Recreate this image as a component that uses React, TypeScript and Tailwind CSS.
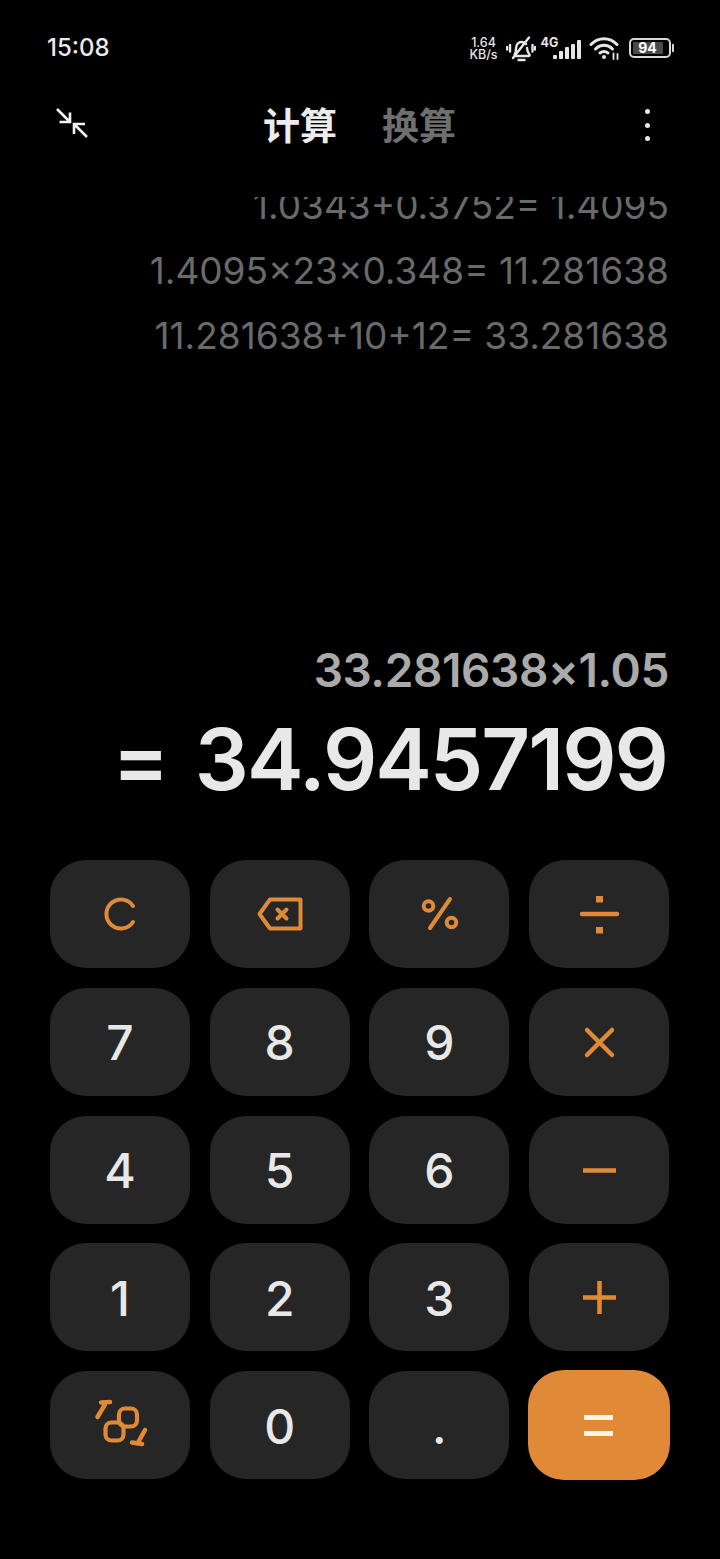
import type { ReactNode } from "react";

const ORANGE = "#e08a38";

function Icon({ children, size = 48, vb = 48 }: { children: ReactNode; size?: number; vb?: number }) {
  return (
    <svg className="overflow-visible" width={size} height={size} viewBox={`0 0 ${vb} ${vb}`} fill="none" stroke={ORANGE} strokeWidth={4} strokeLinecap="round" strokeLinejoin="round">
      {children}
    </svg>
  );
}

const ClearIcon = () => (
  <Icon>
    <path d="M37 16A14.500 14.500 0 1 0 37 32" />
  </Icon>
);

const BackspaceIcon = () => (
  <Icon>
    <path d="M14 9.500H44.500V38.500H14L3.500 24Z" />
    <path d="M21.500 19.500l9 9M30.500 19.500l-9 9" />
  </Icon>
);

const PercentIcon = () => (
  <Icon>
    <circle cx="13.500" cy="16" r="4.800" />
    <circle cx="36.500" cy="32.500" r="4.800" />
    <path d="M35 9 15 38" />
  </Icon>
);

const DivideIcon = () => (
  <Icon>
    <path d="M7 24h35" strokeWidth={4.500} />
    <rect x="21" y="6" width="7" height="6.500" fill={ORANGE} stroke="none" />
    <rect x="21" y="37" width="7" height="6.500" fill={ORANGE} stroke="none" />
  </Icon>
);

const TimesIcon = () => (
  <Icon>
    <path d="M12 12l25 25M37 12 12 37" strokeWidth={4.500} />
  </Icon>
);

const MinusIcon = () => (
  <Icon>
    <path d="M8 24.500h33" strokeWidth={4.500} strokeLinecap="butt" />
  </Icon>
);

const PlusIcon = () => (
  <Icon>
    <path d="M8 24.500h33M24.500 8v33" strokeWidth={4.500} strokeLinecap="butt" />
  </Icon>
);

const SwapIcon = () => (
  <Icon size={52} vb={52}>
    <rect x="11.500" y="23.500" width="18" height="18" rx="6" strokeWidth={4.200} />
    <rect x="25" y="9.500" width="18" height="18" rx="6" strokeWidth={4.200} />
    <path d="M3.500 18 11 5.500M7 3.500l9-.5" strokeWidth={4.500} />
    <path d="M51 31l-7.500 13.500M38 43.500l10 1.500" strokeWidth={4.500} />
  </Icon>
);

const keys: { id: string; label?: string; icon?: ReactNode; accent?: boolean }[] = [
  { id: "clear", icon: <ClearIcon /> },
  { id: "back", icon: <BackspaceIcon /> },
  { id: "percent", icon: <PercentIcon /> },
  { id: "divide", icon: <DivideIcon /> },
  { id: "7", label: "7" },
  { id: "8", label: "8" },
  { id: "9", label: "9" },
  { id: "times", icon: <TimesIcon /> },
  { id: "4", label: "4" },
  { id: "5", label: "5" },
  { id: "6", label: "6" },
  { id: "minus", icon: <MinusIcon /> },
  { id: "1", label: "1" },
  { id: "2", label: "2" },
  { id: "3", label: "3" },
  { id: "plus", icon: <PlusIcon /> },
  { id: "swap", icon: <SwapIcon /> },
  { id: "0", label: "0" },
  { id: "dot", label: "." },
  { id: "equals", accent: true },
];

function StatusIcons() {
  return (
    <div className="flex items-center text-[#e6e6e6]">
      <div className="mb-[1px] w-[30px] text-center text-[12.500px] leading-[12px] font-medium">
        1.64
        <br />
        KB/s
      </div>
      {/* muted bell */}
      <svg className="ml-[7px]" width="30" height="26" viewBox="0 0 30 26" fill="none" stroke="#e6e6e6" strokeWidth="2.400" strokeLinecap="round" strokeLinejoin="round">
        <path d="M8.500 18.500c1.500-1.500 1.500-3.500 1.500-6 0-4 2.500-6.500 5.500-6.500 2 0 3.500.8 4.500 2" />
        <path d="M21 12c.2 3 1 5 2.500 6.500 .6 1-.2 1.500-1 1.500H9" />
        <path d="M12.500 24h6" />
        <path d="M23 1.500 7 22" />
        <path d="M4 9v6.500M26.500 9v6.500" />
        <path d="M1 11v2.500M29 11v2.500" />
      </svg>
      {/* 4G and signal bars */}
      <div className="relative ml-[5px] h-[26px] w-[41px]">
        <span className="absolute top-[1px] left-0 text-[12.500px] leading-[12px] font-bold">4G</span>
        <div className="absolute right-[1px] bottom-[3px] flex items-end gap-[2.500px]">
          <span className="h-[4px] w-[3.500px] rounded-[1px] bg-[#e6e6e6]" />
          <span className="h-[8px] w-[3.500px] rounded-[1px] bg-[#e6e6e6]" />
          <span className="h-[12px] w-[3.500px] rounded-[1px] bg-[#e6e6e6]" />
          <span className="h-[15px] w-[3.500px] rounded-[1px] bg-[#e6e6e6]" />
          <span className="h-[19px] w-[3.500px] rounded-[1px] bg-[#e6e6e6]" />
        </div>
      </div>
      {/* wifi */}
      <svg className="mt-[-2px] ml-[7px]" width="32" height="24" viewBox="0 0 32 24" fill="none" stroke="#e6e6e6" strokeWidth="3" strokeLinecap="round">
        <path d="M2 8.500C9.500 .8 20.500 .8 28 8.500" />
        <path d="M6.500 13C11.500 8 18.500 8 23.500 13" />
        <path d="M11 17c2.800-2 5.200-2 8 0" />
        <circle cx="15" cy="21" r="2" fill="#e6e6e6" stroke="none" />
        <path d="M24.500 17.500v5.500M28.500 18v5" strokeWidth="1.800" />
      </svg>
      {/* battery */}
      <div className="mt-[-2px] ml-[8px] flex items-center">
        <div className="flex h-[20px] w-[42px] items-center rounded-[5px] border-2 border-[#d8d8d8] p-[2px]">
          <div className="flex h-full w-[30px] items-center justify-center rounded-[1px] bg-[#4a4a4a] text-[14px] leading-none font-bold text-white">94</div>
        </div>
        <span className="ml-[1.500px] h-[8px] w-[2px] rounded-r-[1px] bg-[#d8d8d8]" />
      </div>
    </div>
  );
}

export default function App() {
  return (
    <div className="flex h-[1559px] w-[720px] flex-col overflow-hidden bg-black font-['Inter','Noto_Sans_CJK_SC',sans-serif]">
      {/* status bar */}
      <div className="flex h-[62px] items-end justify-between pr-[46px] pl-[47px] text-[#eaeaea]">
        <span className="text-[24px] leading-[28px] font-medium">15:08</span>
        <StatusIcons />
      </div>

      {/* title row */}
      <div className="relative mt-[33px] flex h-[60px] items-center justify-center gap-[45px] pr-[1px]">
        <svg className="absolute top-[11px] left-[55px]" width="34" height="34" viewBox="0 0 34 34" fill="none" stroke="#f2f2f2" strokeWidth="2.600">
          <path d="M2 3 15 16M15 6.500V16H4.500" />
          <path d="M32 31 19 18M19 28V18H30" />
        </svg>
        <span className="pt-[3px] text-[37px] leading-[60px] font-bold text-[#ececec]">计算</span>
        <span className="pt-[3px] text-[37px] leading-[60px] font-bold text-[#6f6f6f]">换算</span>
        <div className="absolute top-[14px] right-[70px] flex flex-col gap-[8.500px]">
          <span className="size-[5px] rounded-full bg-[#e8e8e8]" />
          <span className="size-[5px] rounded-full bg-[#e8e8e8]" />
          <span className="size-[5px] rounded-full bg-[#e8e8e8]" />
        </div>
      </div>

      {/* history, the oldest line runs off the top */}
      <div className="mt-[42px] flex h-[171px] flex-col items-end justify-end overflow-hidden pr-[51px] text-[37px] leading-[65px] whitespace-nowrap text-[#6a6a6a]">
        <div className="shrink-0">1.0343+0.3752= 1.4095</div>
        <div className="shrink-0">1.4095×23×0.348= 11.281638</div>
        <div className="shrink-0">11.281638+10+12= 33.281638</div>
      </div>

      {/* current expression and result */}
      <div className="mt-[274px] pr-[51px] text-right whitespace-nowrap">
        <div className="text-[46px] leading-[56px] font-semibold tracking-[-0.4px] text-[#aaaaaa]">33.281638×1.05</div>
        <div className="mt-[12px] mr-[2px] text-[85px] leading-[100px] font-semibold tracking-[-2px] [word-spacing:8px] text-[#e8e8e8]">= 34.9457199</div>
      </div>

      {/* keypad */}
      <div className="mt-[50px] grid grid-cols-4 gap-x-[19.500px] gap-y-[19.750px] pr-[51px] pl-[50px]">
        {keys.map((k) => (
          <button
            key={k.id}
            className={`flex items-center justify-center rounded-[36px] text-[48px] leading-none font-medium text-[#e8e8e8] ${k.accent ? "-mx-[1px] -my-[1px] h-[110px] bg-[#e08a38]" : "h-[108px] bg-[#262626]"}`}
          >
            {k.accent ? (
              <span className="flex flex-col gap-[11px]">
                <span className="h-[5px] w-[29px] bg-[#fff4e8]" />
                <span className="h-[5px] w-[29px] bg-[#fff4e8]" />
              </span>
            ) : k.icon ? (
              k.icon
            ) : (
              <span className="pt-[3px]">{k.label}</span>
            )}
          </button>
        ))}
      </div>
    </div>
  );
}
